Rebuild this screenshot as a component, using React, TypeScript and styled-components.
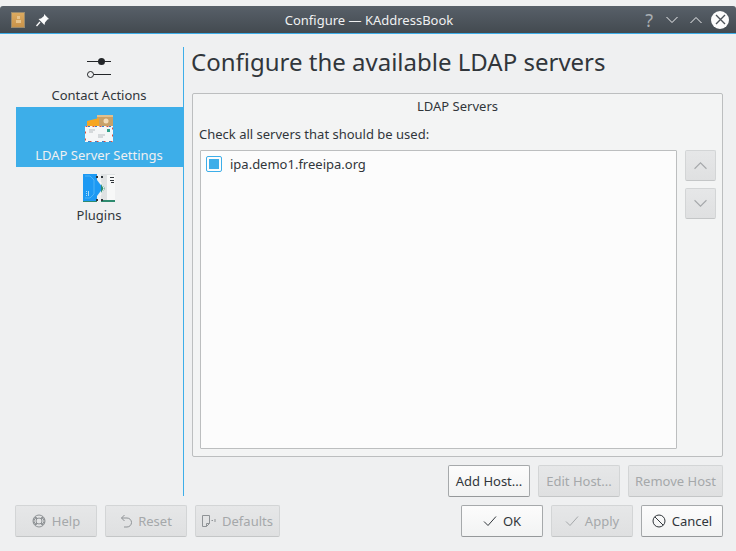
import React from 'react';
import styled, { createGlobalStyle, css } from 'styled-components';

const Global = createGlobalStyle`
  html, body { margin: 0; padding: 0; background: #eff0f1; }
  * { box-sizing: border-box; }
`;

const Window = styled.div`
  width: 736px;
  height: 551px;
  display: flex;
  flex-direction: column;
  overflow: hidden;
  background: #eff0f1;
  color: #31363b;
  font-family: 'Noto Sans', sans-serif;
  font-size: 13px;
`;

const TitleBar = styled.div`
  margin-top: 6px;
  height: 28px;
  flex: none;
  display: flex;
  align-items: center;
  padding: 0 7px 0 11px;
  border-bottom: 1px solid #3daee9;
  border-radius: 3px 3px 0 0;
  background: linear-gradient(#586069, #434a50);
  color: #eff0f1;
`;

const TitleLeft = styled.div`
  width: 110px;
  display: flex;
  align-items: center;
  gap: 11px;
`;

const AppIcon = styled.div`
  width: 14px;
  height: 16px;
  display: flex;
  align-items: center;
  justify-content: center;
  border: 1px solid #9a8a6c;
  background: linear-gradient(#dcaa60, #c9934a);
`;

const TitleText = styled.div`
  flex: 1;
  text-align: center;
  font-size: 13px;
  padding-right: 2px;
`;

const TitleRight = styled.div`
  width: 110px;
  display: flex;
  align-items: center;
  justify-content: flex-end;
  gap: 12px;
`;

const HelpMark = styled.span`
  color: #a8adb1;
  font-size: 18px;
  line-height: 1;
  margin-right: 1px;
`;

const CloseButton = styled.div`
  width: 18px;
  height: 18px;
  border-radius: 50%;
  background: #fcfcfc;
  display: flex;
  align-items: center;
  justify-content: center;
  margin-left: -3px;
`;

const Body = styled.div`
  flex: 1;
  min-height: 0;
  display: flex;
  padding: 13px 13px 0 16px;
`;

const Sidebar = styled.nav`
  width: 168px;
  flex: none;
  border-right: 1px solid #3daee9;
`;

const NavItem = styled.div<{ $active?: boolean }>`
  height: 60px;
  display: flex;
  flex-direction: column;
  align-items: center;
  padding: 5px 1px 0 0;
  ${(p) =>
    p.$active &&
    css`
      background: #3daee9;
      color: #eff0f1;
    `}
`;

const NavIcon = styled.div`
  height: 32px;
  display: flex;
  align-items: center;
  justify-content: center;
`;

const NavLabel = styled.div`
  line-height: 18px;
  margin-top: 2px;
`;

const Main = styled.main`
  flex: 1;
  min-width: 0;
  display: flex;
  flex-direction: column;
  padding-left: 8px;
`;

const Heading = styled.h1`
  flex: none;
  margin: 0 0 13px -1px;
  height: 33px;
  font-size: 24px;
  line-height: 29px;
  font-weight: 400;
  color: #31363b;
`;

const Group = styled.section`
  flex: none;
  height: 364px;
  padding: 4px 6px 7px 6px;
  border: 1px solid #bcbebf;
  border-radius: 2px;
  background: #f3f4f4;
  display: flex;
  flex-direction: column;
`;

const GroupTitle = styled.div`
  height: 18px;
  line-height: 17px;
  text-align: center;
`;

const GroupHint = styled.div`
  margin-top: 9px;
  height: 18px;
  line-height: 18px;
`;

const ListRow = styled.div`
  flex: 1;
  min-height: 0;
  display: flex;
  gap: 8px;
  margin-top: 7px;
`;

const ServerList = styled.div`
  width: 477px;
  margin-left: 1px;
  border: 1px solid #bcbebf;
  border-radius: 1px;
  background: #fcfcfc;
  padding: 5px;
`;

const ServerRow = styled.div`
  display: flex;
  align-items: center;
  gap: 8px;
  height: 16px;
`;

const CheckBox = styled.div`
  width: 16px;
  height: 16px;
  border: 1px solid #3daee9;
  border-radius: 2px;
  background: #fcfcfc;
  display: flex;
  align-items: center;
  justify-content: center;
  &::after {
    content: '';
    width: 10px;
    height: 10px;
    background: #3daee9;
  }
`;

const SideButtons = styled.div`
  display: flex;
  flex-direction: column;
  gap: 7px;
`;

const Button = styled.div<{ $width: number; $height?: number; $disabled?: boolean }>`
  display: flex;
  flex: none;
  align-items: center;
  justify-content: center;
  height: ${(p) => p.$height ?? 32}px;
  border-radius: 2px;
  width: ${(p) => p.$width}px;
  gap: 6px;
  white-space: nowrap;
  ${(p) =>
    p.$disabled
      ? css`
          color: #a5a8aa;
          background: linear-gradient(#e6e7e8, #dfe0e1);
          border: 1px solid #d3d5d6;
          border-bottom-color: #c4c6c7;
        `
      : css`
          color: #31363b;
          background: linear-gradient(#fcfcfc, #f2f3f3);
          border: 1px solid #a6a9ab;
          border-bottom-color: #96999b;
        `}
`;

const HostActions = styled.div`
  flex: none;
  display: flex;
  justify-content: flex-end;
  gap: 8px;
  margin-top: 8px;
`;

const Footer = styled.footer`
  flex: none;
  height: 55px;
  padding: 9px 13px 0 15px;
  display: flex;
  gap: 8px;
`;

const Spacer = styled.div`
  flex: 1;
`;

const Stroke = styled.svg<{ $muted?: boolean }>`
  display: block;
  fill: none;
  stroke: ${(p) => (p.$muted ? '#8f9396' : 'currentColor')};
  stroke-width: 1;
`;

const ContactIcon = () => (
  <svg width="32" height="32" viewBox="0 0 32 32">
    <path d="M4 9.5h24M4 22.5h24" stroke="#232629" fill="none" />
    <circle cx="18.5" cy="9.5" r="3.5" fill="#232629" />
    <circle cx="7.5" cy="22.5" r="3" fill="#eff0f1" stroke="#232629" />
  </svg>
);

const MailIcon = () => (
  <svg width="32" height="32" viewBox="0 0 32 32">
    <path d="M14 3h16v13H14z" fill="#c9a168" />
    <path d="M14 3h16v2H14z" fill="#e2c08c" />
    <circle cx="23" cy="9" r="2.5" fill="#f3dcb8" />
    <path d="M4 9l12-3v8H4z" fill="#f6a623" />
    <path d="M2 14h28v16H2z" fill="#f4f6f7" />
    <path d="M2.5 14.5h27v15h-27z" fill="none" stroke="#d9503f" strokeDasharray="2 5" />
    <path d="M5 14.5h24M5 29.5h24" fill="none" stroke="#3f7fc9" strokeDasharray="2 5" />
    <path d="M6 18h6M6 20h4M15 23h7M15 25h5" stroke="#b5bcc0" />
    <path d="M24 17h3v3h-3z" fill="#2fa18a" />
  </svg>
);

const PluginIcon = () => (
  <svg width="32" height="32" viewBox="0 0 32 32">
    <path d="M0 2h14v28H0z" fill="#1d99f3" />
    <path d="M14 8l6 8-6 8z" fill="#1d99f3" />
    <path d="M2 4h5l4 4v14l-4 4H2" fill="none" stroke="#4fb3f6" />
    <path d="M3 19h1v1H3zM3 21h1v1H3zM3 23h1v1H3zM5 19h1v5H5z" fill="#a8dbfa" />
    <path d="M0 29h14v1H0z" fill="#2e8b6f" />
    <path d="M18 2h14v28H18z" fill="#dfe2e3" />
    <path d="M24 3h8v25h-8z" fill="#f7f8f8" />
    <path d="M27 5h4v1h-4zM27 8h4v1h-4zM28 10h3v1h-3z" fill="#31363b" />
    <path d="M18 11l4 5.5-4 5.5z" fill="#2e8b6f" />
    <path d="M18 10l3.5 6.500-3.500 6.500h-1l3.500-6.500-3.500-6.500z" fill="#fcfcfc" />
    <path d="M18 28h14v2H18z" fill="#2e8b6f" />
    <path d="M13 4h2v2h-2zM13 27h2v2h-2zM18 4h2v2h-2zM18 27h2v2h-2z" fill="#31363b" />
  </svg>
);

const PinIcon = () => (
  <svg width="14" height="14" viewBox="0 0 14 14">
    <path d="M8 1l5 5-1.500 .5-2.500 3-.5 2.500-6-6 2.500-.5 3-2.500z" fill="#fcfcfc" />
    <path d="M4 9l-3.500 4" stroke="#fcfcfc" strokeWidth="1.4" />
  </svg>
);

const Chevron = ({ up, size = 12 }: { up?: boolean; size?: number }) => (
  <Stroke width={size} height={size} viewBox="0 0 12 12">
    <path d={up ? 'M.5 9l5.500-5.500L11.500 9' : 'M.5 3l5.500 5.500L11.500 3'} />
  </Stroke>
);

const CheckIcon = () => (
  <Stroke width="14" height="12" viewBox="0 0 14 12">
    <path d="M1 6.500l4 4L13 1.500" />
  </Stroke>
);

const CancelIcon = () => (
  <Stroke width="14" height="14" viewBox="0 0 14 14">
    <circle cx="7" cy="7" r="6" />
    <path d="M2.800 2.800l8.400 8.400" />
  </Stroke>
);

const HelpIcon = () => (
  <Stroke $muted width="14" height="14" viewBox="0 0 14 14">
    <circle cx="7" cy="7" r="6" />
    <circle cx="7" cy="7" r="3" />
    <path d="M3 3l2 2M11 3L9 5M3 11l2-2M11 11L9 9M1 5.500h2M1 8.500h2M11 5.500h2M11 8.500h2" strokeWidth="2" />
  </Stroke>
);

const ResetIcon = () => (
  <Stroke $muted width="12" height="14" viewBox="0 0 12 14">
    <path d="M4.500 1L1.500 4l3 3M1.500 4H7a4.500 4.500 0 0 1 0 9H4" />
  </Stroke>
);

const DefaultsIcon = () => (
  <Stroke $muted width="14" height="14" viewBox="0 0 14 14">
    <path d="M.5 1.500h7v8l-3 3h-4zM7.500 9.500h-3v3" />
    <path d="M13 5v3M11 6.500l-1.500 0" />
  </Stroke>
);

export default function App() {
  return (
    <Window>
      <Global />
      <TitleBar>
        <TitleLeft>
          <AppIcon>
            <svg width="5" height="7" viewBox="0 0 5 7">
              <path d="M1 0h3v3H1zM0 4h5v3H0z" fill="#e8c48c" />
            </svg>
          </AppIcon>
          <PinIcon />
        </TitleLeft>
        <TitleText>Configure — KAddressBook</TitleText>
        <TitleRight>
          <HelpMark>?</HelpMark>
          <Chevron />
          <Chevron up />
          <CloseButton>
            <svg width="11" height="11" viewBox="0 0 11 11">
              <path d="M1 1l9 9M10 1l-9 9" stroke="#4d5359" strokeWidth="1.4" />
            </svg>
          </CloseButton>
        </TitleRight>
      </TitleBar>
      <Body>
        <Sidebar>
          <NavItem>
            <NavIcon>
              <ContactIcon />
            </NavIcon>
            <NavLabel>Contact Actions</NavLabel>
          </NavItem>
          <NavItem $active>
            <NavIcon>
              <MailIcon />
            </NavIcon>
            <NavLabel>LDAP Server Settings</NavLabel>
          </NavItem>
          <NavItem>
            <NavIcon>
              <PluginIcon />
            </NavIcon>
            <NavLabel>Plugins</NavLabel>
          </NavItem>
        </Sidebar>
        <Main>
          <Heading>Configure the available LDAP servers</Heading>
          <Group>
            <GroupTitle>LDAP Servers</GroupTitle>
            <GroupHint>Check all servers that should be used:</GroupHint>
            <ListRow>
              <ServerList>
                <ServerRow>
                  <CheckBox />
                  <span>ipa.demo1.freeipa.org</span>
                </ServerRow>
              </ServerList>
              <SideButtons>
                <Button $width={31} $height={31} $disabled>
                  <Chevron up size={13} />
                </Button>
                <Button $width={31} $height={31} $disabled>
                  <Chevron size={13} />
                </Button>
              </SideButtons>
            </ListRow>
          </Group>
          <HostActions>
            <Button $width={82}>Add Host...</Button>
            <Button $width={82} $disabled>
              Edit Host...
            </Button>
            <Button $width={95} $disabled>
              Remove Host
            </Button>
          </HostActions>
        </Main>
      </Body>
      <Footer>
        <Button $width={82} $disabled>
          <HelpIcon />
          Help
        </Button>
        <Button $width={82} $disabled>
          <ResetIcon />
          Reset
        </Button>
        <Button $width={85} $disabled>
          <DefaultsIcon />
          Defaults
        </Button>
        <Spacer />
        <Button $width={82}>
          <CheckIcon />
          OK
        </Button>
        <Button $width={82} $disabled>
          <CheckIcon />
          Apply
        </Button>
        <Button $width={82}>
          <CancelIcon />
          Cancel
        </Button>
      </Footer>
    </Window>
  );
}
